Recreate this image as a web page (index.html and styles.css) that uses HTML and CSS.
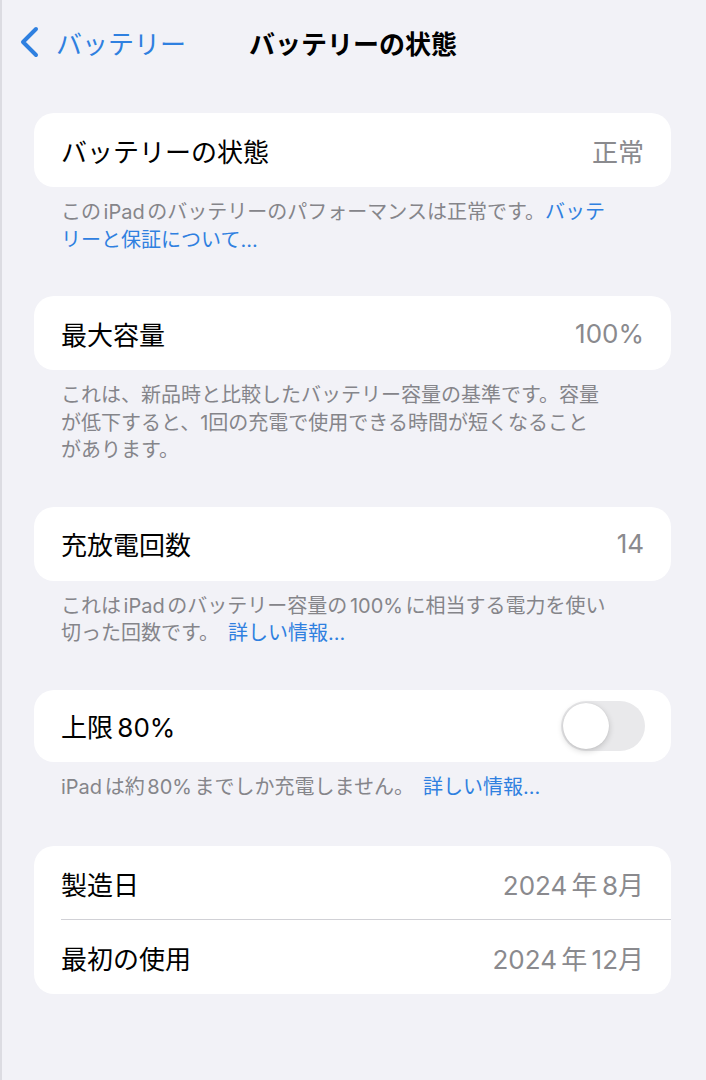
FILE: index.html
```html
<!DOCTYPE html>
<html lang="ja">
<head>
  <meta charset="utf-8">
  <link rel="stylesheet" href="styles.css">
</head>
<body>
  <div class="page">
    <div class="nav">
      <a class="back">
        <svg class="chevron" width="22" height="32" viewBox="0 0 22 32">
          <path d="M18 3 L5 16 L18 29" fill="none" stroke="#2f80e0" stroke-width="4" stroke-linecap="round" stroke-linejoin="round"/>
        </svg>
        <span>バッテリー</span>
      </a>
      <div class="title">バッテリーの状態</div>
      <div></div>
    </div>

    <div class="content">
      <div class="section">
        <div class="card">
          <div class="row"><span class="label">バッテリーの状態</span><span class="value">正常</span></div>
        </div>
        <p class="footer">この iPad のバッテリーのパフォーマンスは正常です。<a class="link">バッテ<br>リーと保証について...</a></p>
      </div>

      <div class="section">
        <div class="card">
          <div class="row"><span class="label">最大容量</span><span class="value">100%</span></div>
        </div>
        <p class="footer">これは、新品時と比較したバッテリー容量の基準です。容量<br>が低下すると、1回の充電で使用できる時間が短くなること<br>があります。</p>
      </div>

      <div class="section">
        <div class="card">
          <div class="row"><span class="label">充放電回数</span><span class="value">14</span></div>
        </div>
        <p class="footer">これは iPad のバッテリー容量の 100% に相当する電力を使い<br>切った回数です。<a class="link more">詳しい情報...</a></p>
      </div>

      <div class="section wide">
        <div class="card">
          <div class="row toggle-row">
            <span class="label">上限 80%</span>
            <span class="toggle"><span class="knob"></span></span>
          </div>
        </div>
        <p class="footer">iPad は約 80% までしか充電しません。<a class="link more">詳しい情報...</a></p>
      </div>

      <div class="section">
        <div class="card">
          <div class="row divided"><span class="label">製造日</span><span class="value">2024 年 8月</span></div>
          <div class="row"><span class="label">最初の使用</span><span class="value">2024 年 12月</span></div>
        </div>
      </div>
    </div>
  </div>
</body>
</html>
```

FILE: styles.css
```css
html, body {
  margin: 0;
  padding: 0;
  background: #f2f2f7;
}

body {
  font-family: Inter, "Noto Sans CJK JP", sans-serif;
  color: #000;
  word-spacing: -3px;
}

.page {
  width: 706px;
  min-height: 1080px;
  box-sizing: border-box;
  border-left: 2px solid #dcdce2;
}

.nav {
  height: 84px;
  display: grid;
  grid-template-columns: 1fr auto 1fr;
  align-items: center;
  margin-left: -2px;
}

.back {
  display: flex;
  align-items: center;
  gap: 16px;
  padding-left: 18px;
  color: #2f80e0;
  font-size: 26px;
}

.chevron {
  display: block;
}

.title {
  font-size: 26px;
  font-weight: 700;
}

.content {
  padding: 29px 35px 0 32px;
}

.section {
  margin-bottom: 42px;
}

.section.wide {
  margin-bottom: 45px;
}

.card {
  background: #fff;
  border-radius: 20px;
  overflow: hidden;
}

.row {
  height: 74px;
  display: flex;
  align-items: center;
  justify-content: space-between;
  padding: 0 27px 0 27px;
  font-size: 26px;
  position: relative;
}

.toggle-row {
  height: 72px;
  padding-right: 26px;
}

.row.divided::after {
  content: "";
  position: absolute;
  left: 27px;
  right: 0;
  bottom: 0;
  height: 1px;
  background: #d1d1d6;
}

.value {
  color: #8a8a8e;
}

.footer {
  margin: 0;
  padding: 12px 27px 0;
  font-size: 20px;
  line-height: 27.5px;
  color: #85858a;
}

.link {
  color: #2f80e0;
}

.link.more {
  margin-left: 9px;
}

.toggle {
  width: 84px;
  height: 50px;
  border-radius: 25px;
  background: #e9e9eb;
  position: relative;
}

.knob {
  position: absolute;
  left: 2px;
  top: 2px;
  width: 46px;
  height: 46px;
  border-radius: 50%;
  background: #fff;
  box-shadow: 0 2px 6px rgba(0, 0, 0, 0.18), 0 0 1px rgba(0, 0, 0, 0.12);
}
```
